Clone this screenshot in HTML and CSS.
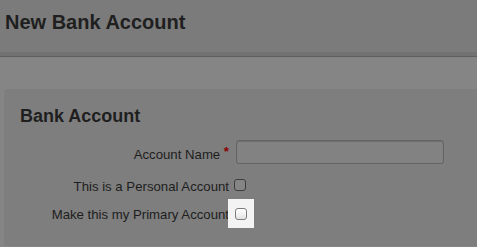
FILE: index.html
```html
<!DOCTYPE html>
<html lang="en">
<head>
    <meta charset="UTF-8">
    <title>New Bank Account</title>
    <link rel="stylesheet" href="styles.css">
</head>
<body>

    <!-- Kop -->
    <div class="page-header">
        <h1 class="page-title">New Bank Account</h1>
    </div>

    <div class="content">
        <div class="panel">
            <h2 class="panel-title">Bank Account</h2>

            <div class="form-grid">
                <label class="form-label form-label-first">Account Name <span class="required">*</span></label>
                <div class="form-field form-field-first"><input type="text" class="text-input"></div>

                <label class="form-label">This is a Personal Account</label>
                <div class="form-field"><span class="checkbox"></span></div>

                <label class="form-label">Make this my Primary Account</label>
                <div class="form-field"><span class="spotlight"><span class="checkbox checkbox-lit"></span></span></div>
            </div>
        </div>
    </div>

</body>
</html>
```

FILE: styles.css
```css
body {
    margin: 0;
    font-family: "Liberation Sans", Arial, sans-serif;
    background-color: #858585;
    color: #1d1d1d;
    height: 247px;
    overflow: hidden;
}

.page-header {
    height: 52px;
    background-color: #7b7b7b;
    border-bottom: 4px solid #727272;
    box-shadow: 0 1px 0 #5f5f5f;
    display: flex;
    align-items: center;
    padding-left: 5px;
}

.page-title {
    margin: 0;
    font-size: 20px;
    font-weight: bold;
    color: #1f1f1f;
    padding-bottom: 8px;
}

.content {
    padding: 33px 0 0 4px;
}

.panel {
    background-color: #7e7e7e;
    border-top-left-radius: 4px;
    padding: 17px 0 17px 16px;
}

.panel-title {
    margin: 0 0 11px 0;
    font-size: 18px;
    font-weight: bold;
    color: #1f1f1f;
}

/* Formulier in twee kolommen */
.form-grid {
    display: grid;
    grid-template-columns: 209px 208px;
    grid-template-rows: 35px 28px 28px;
    column-gap: 7px;
    align-items: center;
    font-size: 13.2px;
}

.form-label {
    text-align: right;
    line-height: 28px;
}

.form-label-first {
    align-self: start;
    line-height: 34px;
}

.required {
    color: #8a0000;
    font-weight: bold;
    position: relative;
    top: -3px;
}

.form-field {
    display: flex;
    align-items: center;
}

.form-field-first {
    align-self: start;
}

.text-input {
    box-sizing: border-box;
    width: 208px;
    height: 24px;
    margin: 2px 0 0 0;
    border: 1px solid #646464;
    border-radius: 3px;
    background-color: #828282;
    box-shadow: inset 0 1px 1px rgba(0, 0, 0, 0.15);
}

.checkbox {
    display: inline-block;
    box-sizing: border-box;
    width: 12px;
    height: 12px;
    margin-left: -2px;
    margin-top: -4px;
    border: 1px solid #3e3e3e;
    border-radius: 3px;
    background-color: #858585;
}

/* Uitgelichte checkbox */
.spotlight {
    display: inline-flex;
    align-items: center;
    justify-content: center;
    width: 26px;
    height: 29px;
    margin-left: -8px;
    margin-top: -3px;
    background-color: #f3f3f3;
}

.checkbox-lit {
    margin: 0;
    border-color: #7d7d7d;
    background: linear-gradient(#ffffff, #e4e4e4);
}
```
